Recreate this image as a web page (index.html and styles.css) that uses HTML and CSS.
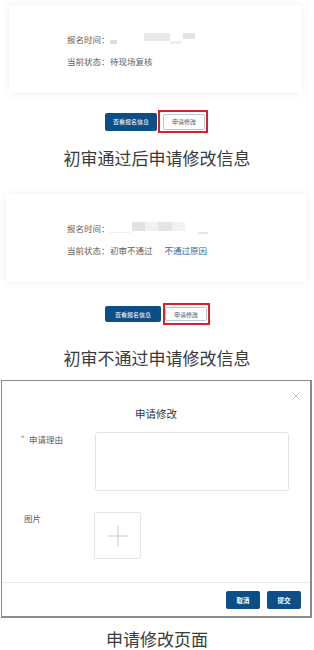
FILE: index.html
```html
<!doctype html>
<html lang="zh-CN">
  <head>
    <meta charset="UTF-8" />
    <meta name="viewport" content="width=device-width, initial-scale=1.0" />
    <title>申请修改说明</title>
    <link rel="stylesheet" href="styles.css">
  </head>
  <body>
    <!-- 初审通过 -->
    <section class="demo demo-pass">
      <div class="card card-pass">
        <div class="info-row">
          <span class="info-label">报名时间：</span>
          <span class="mask">
            <span class="blot blot-a"></span>
            <span class="blot blot-b"></span>
            <span class="blot blot-c"></span>
            <span class="blot blot-d"></span>
          </span>
        </div>
        <div class="info-row">
          <span class="info-label">当前状态：</span>
          <span class="info-value">待现场复核</span>
        </div>
      </div>
      <div class="actions actions-pass">
        <button class="btn btn-dark">查看报名信息</button>
        <span class="mark">
          <button class="btn btn-line">申请修改</button>
        </span>
      </div>
      <p class="caption">初审通过后申请修改信息</p>
    </section>

    <!-- 初审不通过 -->
    <section class="demo demo-fail">
      <div class="card card-fail">
        <div class="info-row">
          <span class="info-label">报名时间：</span>
          <span class="mask mask-fail">
            <span class="blot blot-line"></span>
            <span class="blot blot-e"></span>
            <span class="blot blot-f"></span>
            <span class="blot blot-g"></span>
            <span class="blot blot-h"></span>
            <span class="blot blot-i"></span>
          </span>
        </div>
        <div class="info-row">
          <span class="info-label">当前状态：</span>
          <span class="info-value">初审不通过</span>
          <a class="info-link" href="#">不通过原因</a>
        </div>
      </div>
      <div class="actions actions-fail">
        <button class="btn btn-dark btn-wide">查看报名信息</button>
        <span class="mark">
          <button class="btn btn-line">申请修改</button>
        </span>
      </div>
      <p class="caption">初审不通过申请修改信息</p>
    </section>

    <!-- 申请修改弹窗 -->
    <section class="demo demo-dialog">
      <div class="dialog">
        <div class="dialog-head">
          <span class="dialog-title">申请修改</span>
          <span class="dialog-close">
            <svg width="8" height="8" viewBox="0 0 8 8">
              <path d="M0.5 0.5 L7.5 7.5 M7.5 0.5 L0.5 7.5" stroke="#b4b4b4" stroke-width="0.8" fill="none" />
            </svg>
          </span>
        </div>
        <div class="dialog-body">
          <div class="form-row">
            <label class="form-label"><span class="req">*</span>申请理由</label>
            <textarea class="form-text"></textarea>
          </div>
          <div class="form-row form-row-pic">
            <label class="form-label form-label-plain">图片</label>
            <div class="upload">
              <svg width="20" height="20" viewBox="0 0 20 20">
                <path d="M10 0 V20 M0 10 H20" stroke="#c8c8c8" stroke-width="1" fill="none" />
              </svg>
            </div>
          </div>
        </div>
        <div class="dialog-foot">
          <button class="btn btn-dark btn-small">取消</button>
          <button class="btn btn-dark btn-small">提交</button>
        </div>
      </div>
      <p class="caption caption-last">申请修改页面</p>
    </section>
  </body>
</html>
```

FILE: styles.css
```css
:root {
  --dark-blue: #0c4f88;
  --mark-red: #d6232b;
  --text: #5e5e5e;
  --caption: #3a3a3a;
  --blot: #e9e9e9;
}

* {
  box-sizing: border-box;
}

body {
  margin: 0;
  background: #ffffff;
  font-family: "Noto Sans CJK SC", "Noto Sans", sans-serif;
  color: var(--text);
}

.demo {
  display: flex;
  flex-direction: column;
}

/* cards */

.card {
  background: #ffffff;
  box-shadow: 0 0 8px rgba(0, 0, 0, 0.07);
  height: 88px;
  padding: 23px 0 0 58px;
  font-size: 8.5px;
}

.card-pass {
  margin: 5px 0 0 9px;
  width: 293px;
}

.card-fail {
  margin: 24px 0 0 6px;
  width: 301px;
  padding-left: 61px;
}

.info-row {
  display: flex;
  align-items: center;
  height: 22px;
  line-height: 22px;
  white-space: nowrap;
}

.info-label {
  width: 43px;
}

.info-link {
  color: #2a69a1;
  text-decoration: none;
  margin-left: 12px;
}

.mask {
  display: flex;
  align-items: flex-start;
  height: 12px;
}

.blot {
  display: block;
  background: var(--blot);
}

.blot-a {
  width: 7px;
  height: 4px;
  margin-top: 7px;
  background: #dedede;
}

.blot-b {
  width: 26px;
  height: 8px;
  margin: 0 0 0 27px;
}

.blot-c {
  width: 12px;
  height: 3px;
  margin-top: 8px;
  background: #efefef;
}

.blot-d {
  width: 12px;
  height: 6px;
  margin-left: 1px;
  background: #e3e3e3;
}

.blot-line {
  width: 20px;
  height: 1px;
  margin-top: 10px;
  background: #efefef;
}

.blot-e {
  width: 13px;
  height: 9px;
  margin-left: 2px;
  background: #e2e2e2;
}

.blot-f {
  width: 13px;
  height: 9px;
  background: #f1f1f1;
}

.blot-g {
  width: 14px;
  height: 9px;
  background: #e4e4e4;
}

.blot-h {
  width: 13px;
  height: 9px;
  background: #f2f2f2;
}

.blot-i {
  width: 10px;
  height: 2px;
  margin: 10px 0 0 13px;
  background: #e6e6e6;
}

/* action buttons */

.actions {
  display: flex;
  align-items: center;
  gap: 1px;
  padding-left: 105px;
}

.actions-pass {
  margin-top: 17px;
}

.actions-fail {
  margin-top: 21px;
  gap: 2px;
}

.btn {
  font-family: inherit;
  border: none;
  border-radius: 2px;
  padding: 0;
  font-size: 6px;
  cursor: pointer;
}

.btn-dark {
  background: var(--dark-blue);
  color: #ffffff;
  width: 52px;
  height: 18px;
}

.btn-wide {
  width: 56px;
  height: 16px;
}

.btn-line {
  background: #ffffff;
  color: #38597a;
  border: 1px solid #b9c7d6;
  width: 42px;
  height: 16px;
}

.mark {
  display: flex;
  align-items: center;
  border: 2px solid var(--mark-red);
  padding: 1px 1px 1px 3px;
  height: 23px;
}

.actions-fail .mark {
  height: 22px;
  padding: 1px 1px 1px 0;
}

.actions-fail .btn-line {
  height: 14px;
}

/* captions */

.caption {
  margin: 13px 0 0;
  text-align: center;
  font-size: 17px;
  line-height: 24px;
  font-weight: 400;
  color: var(--caption);
}

.demo-fail .caption {
  margin-top: 21px;
}

.caption-last {
  margin-top: 11px;
  line-height: 20px;
}

/* dialog */

.dialog {
  margin: 10px 0 0 1px;
  width: 311px;
  border: 1px solid #8c8c8c;
  border-right-width: 2px;
  border-bottom-width: 2px;
  background: #ffffff;
  display: flex;
  flex-direction: column;
}

.dialog-head {
  position: relative;
  padding-top: 23px;
  text-align: center;
  line-height: 14px;
}

.dialog-title {
  font-size: 10.5px;
  color: #333333;
}

.dialog-close {
  position: absolute;
  top: 11px;
  right: 10px;
  display: flex;
}

.dialog-body {
  display: flex;
  flex-direction: column;
  gap: 21px;
  padding: 11px 21px 0 20px;
}

.form-row {
  display: flex;
  align-items: flex-start;
}

.form-label {
  width: 73px;
  font-size: 8.5px;
  line-height: 12px;
  padding-top: 1px;
  color: var(--text);
  display: flex;
  align-items: center;
}

.form-label-plain {
  padding-left: 2px;
}

.req {
  color: #e0533f;
  font-size: 8px;
  width: 8px;
  margin-left: -1px;
}

.form-text {
  flex: 1;
  height: 59px;
  border: 1px solid #e2e2e2;
  border-radius: 3px;
  resize: none;
  outline: none;
}

.form-row-pic .form-label {
  padding-top: 0;
}

.upload {
  margin-left: -1px;
  width: 47px;
  height: 47px;
  border: 1px solid #e6e6e6;
  border-radius: 2px;
  display: flex;
  align-items: center;
  justify-content: center;
}

.dialog-foot {
  margin-top: 23px;
  border-top: 1px solid #ececec;
  padding: 8px 9px 7px 0;
  display: flex;
  justify-content: flex-end;
  gap: 7px;
}

.btn-small {
  width: 34px;
  height: 18px;
  font-size: 6.5px;
  font-weight: 700;
}
```
